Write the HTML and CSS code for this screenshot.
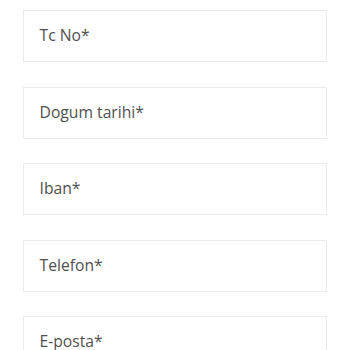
FILE: index.html
```html
<!DOCTYPE html>
<html lang="tr">
<head>
<meta charset="utf-8">
<link rel="stylesheet" href="styles.css">
</head>
<body>
<form class="form">
  <div class="field"><span class="label">Tc No*</span></div>
  <div class="field"><span class="label">Dogum tarihi*</span></div>
  <div class="field"><span class="label">Iban*</span></div>
  <div class="field"><span class="label">Telefon*</span></div>
  <div class="field"><span class="label">E-posta*</span></div>
</form>
</body>
</html>
```
FILE: styles.css
```css
html, body {
  margin: 0;
  padding: 0;
  background: #fff;
}
body {
  font-family: "Open Sans", "Liberation Sans", sans-serif;
  overflow: hidden;
  height: 350px;
}
.form {
  display: flex;
  flex-direction: column;
  gap: 24.5px;
  padding: 10px 23px 0 23px;
}
.field {
  box-sizing: border-box;
  flex: none;
  width: 304px;
  height: 52px;
  border: 1.5px solid #ebebeb;
  display: flex;
  align-items: center;
  padding: 0 0 2px 15.5px;
}
.label {
  font-size: 15.7px;
  color: #505050;
}
```
